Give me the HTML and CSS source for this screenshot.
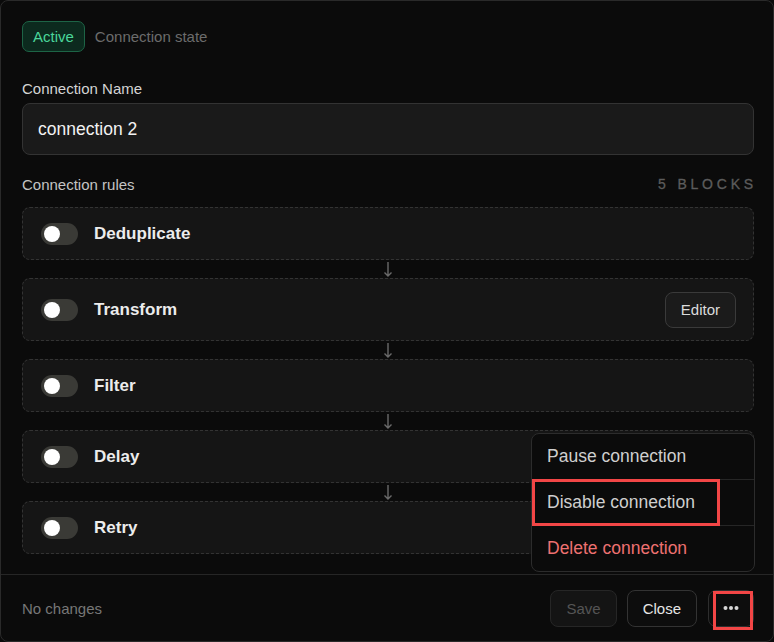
FILE: index.html
```html
<!DOCTYPE html>
<html>
<head>
<meta charset="utf-8">
<link rel="stylesheet" href="styles.css">
</head>
<body>
<div class="panel">
  <div class="content">
    <div class="state-row">
      <span class="badge">Active</span>
      <span class="state-text">Connection state</span>
    </div>
    <label class="field-label">Connection Name</label>
    <div class="input">connection 2</div>
    <div class="rules-head">
      <span class="rules-title">Connection rules</span>
      <span class="rules-count">5 BLOCKS</span>
    </div>
    <div class="blocks">
      <div class="block"><span class="toggle"><span class="knob"></span></span><span class="block-name">Deduplicate</span></div>
      <div class="connector"><svg width="10" height="17" viewBox="0 0 10 17"><path d="M5 1V15M1.5 11.5L5 15L8.5 11.5" fill="none" stroke="#6a6a6a" stroke-width="1.4"/></svg></div>
      <div class="block block-tall"><span class="toggle"><span class="knob"></span></span><span class="block-name">Transform</span><button class="btn editor">Editor</button></div>
      <div class="connector"><svg width="10" height="17" viewBox="0 0 10 17"><path d="M5 1V15M1.5 11.5L5 15L8.5 11.5" fill="none" stroke="#6a6a6a" stroke-width="1.4"/></svg></div>
      <div class="block"><span class="toggle"><span class="knob"></span></span><span class="block-name">Filter</span></div>
      <div class="connector"><svg width="10" height="17" viewBox="0 0 10 17"><path d="M5 1V15M1.5 11.5L5 15L8.5 11.5" fill="none" stroke="#6a6a6a" stroke-width="1.4"/></svg></div>
      <div class="block"><span class="toggle"><span class="knob"></span></span><span class="block-name">Delay</span></div>
      <div class="connector"><svg width="10" height="17" viewBox="0 0 10 17"><path d="M5 1V15M1.5 11.5L5 15L8.5 11.5" fill="none" stroke="#6a6a6a" stroke-width="1.4"/></svg></div>
      <div class="block"><span class="toggle"><span class="knob"></span></span><span class="block-name">Retry</span></div>
    </div>
  </div>
  <div class="footer">
    <span class="status">No changes</span>
    <div class="actions">
      <button class="btn save" disabled>Save</button>
      <button class="btn close">Close</button>
      <button class="btn more"><svg width="16" height="4" viewBox="0 0 16 4"><circle cx="2.5" cy="2" r="2" fill="#d8d8d8"/><circle cx="8" cy="2" r="2" fill="#d8d8d8"/><circle cx="13.5" cy="2" r="2" fill="#d8d8d8"/></svg></button>
    </div>
  </div>
  <div class="menu">
    <div class="menu-item">Pause connection</div>
    <div class="menu-item">Disable connection</div>
    <div class="menu-item danger">Delete connection</div>
  </div>
  <div class="mark mark-disable"></div>
  <div class="mark mark-more"></div>
</div>
</body>
</html>
```
FILE: styles.css
```css
* { box-sizing: border-box; }
html, body { margin: 0; padding: 0; background: #0a0a0a; }
body { font-family: "Liberation Sans", Arial, sans-serif; color: #e6e6e6; }

.panel {
  position: relative;
  width: 774px;
  height: 642px;
  border: 1px solid #2a2a2a;
  border-radius: 8px;
  background: #0b0b0b;
  display: flex;
  flex-direction: column;
}

.content {
  flex: 1;
  padding: 20px 19px 0 21px;
  display: flex;
  flex-direction: column;
}

.state-row { display: flex; align-items: center; gap: 10px; height: 31px; }
.badge {
  height: 31px;
  padding: 0 10px;
  display: flex;
  align-items: center;
  font-size: 15px;
  color: #4ad69a;
  background: #0c2a1e;
  border: 1px solid #1d6446;
  border-radius: 7px;
}
.state-text { font-size: 15px; color: #6c6c6c; }

.field-label {
  margin-top: 29px;
  font-size: 15px;
  line-height: 16px;
  color: #d4d4d4;
}
.input {
  margin-top: 6px;
  height: 52px;
  display: flex;
  align-items: center;
  padding: 0 15px;
  font-size: 17.5px;
  color: #f2f2f2;
  background: #1a1a1a;
  border: 1px solid #333;
  border-radius: 8px;
}

.rules-head {
  margin-top: 21px;
  display: flex;
  justify-content: space-between;
  align-items: center;
  height: 16px;
}
.rules-title { font-size: 15px; color: #c4c4c4; }
.rules-count {
  font-size: 14px;
  font-weight: 400;
  letter-spacing: 3.8px;
  margin-right: -3px;
  color: #5c5c5c;
  -webkit-text-stroke: 0.3px #5c5c5c;
}

.blocks { margin-top: 15px; display: flex; flex-direction: column; }
.block {
  height: 53px;
  display: flex;
  align-items: center;
  padding: 0 17px 0 18px;
  background: #151515;
  border: 1px dashed #333;
  border-radius: 8px;
}
.block-tall { height: 63px; }
.connector {
  height: 18px;
  display: flex;
  justify-content: center;
  align-items: center;
}
.connector svg { display: block; }

.toggle {
  width: 37px;
  height: 22px;
  border-radius: 11px;
  background: #3a3a36;
  display: flex;
  align-items: center;
  padding-left: 3px;
  flex-shrink: 0;
}
.knob { width: 16px; height: 16px; border-radius: 50%; background: #fff; }
.block-name {
  margin-left: 16px;
  font-size: 17px;
  font-weight: 700;
  color: #ececec;
  flex: 1;
}

.btn {
  font-family: "Liberation Sans", Arial, sans-serif;
  font-size: 15px;
  height: 37px;
  padding: 0 15px;
  border-radius: 8px;
  border: 1px solid #333;
  background: #111;
  color: #e2e2e2;
}
.editor { height: 36px; background: #1b1b1b; border-color: #3a3a3a; color: #dcdcdc; }

.footer {
  height: 67px;
  border-top: 1px solid #262626;
  display: flex;
  align-items: center;
  justify-content: space-between;
  padding: 0 19px 0 21px;
}
.status { font-size: 15px; color: #777; }
.actions { display: flex; gap: 10px; align-items: center; }
.save { background: #141414; border-color: #262626; color: #555; }
.close { background: #0d0d0d; color: #e6e6e6; }
.more { width: 46px; margin-left: 1px; padding: 0; display: flex; align-items: center; justify-content: center; background: #0d0d0d; border-color: #2e2e2e; }

.menu {
  position: absolute;
  left: 530px;
  top: 432px;
  width: 224px;
  background: #0b0b0b;
  border: 1px solid #2c2c2c;
  border-radius: 8px;
  display: flex;
  flex-direction: column;
}
.menu-item {
  height: 46px;
  display: flex;
  align-items: center;
  padding: 0 15px;
  font-size: 17.5px;
  color: #cfcfcf;
  border-top: 1px solid #262626;
}
.menu-item:first-child { border-top: none; height: 45px; }
.danger { color: #ee7171; }

.mark { position: absolute; border: 3px solid #f24646; }
.mark-disable { left: 531px; top: 478px; width: 188px; height: 47px; }
.mark-more { left: 712px; top: 590px; width: 40px; height: 39px; }
```
